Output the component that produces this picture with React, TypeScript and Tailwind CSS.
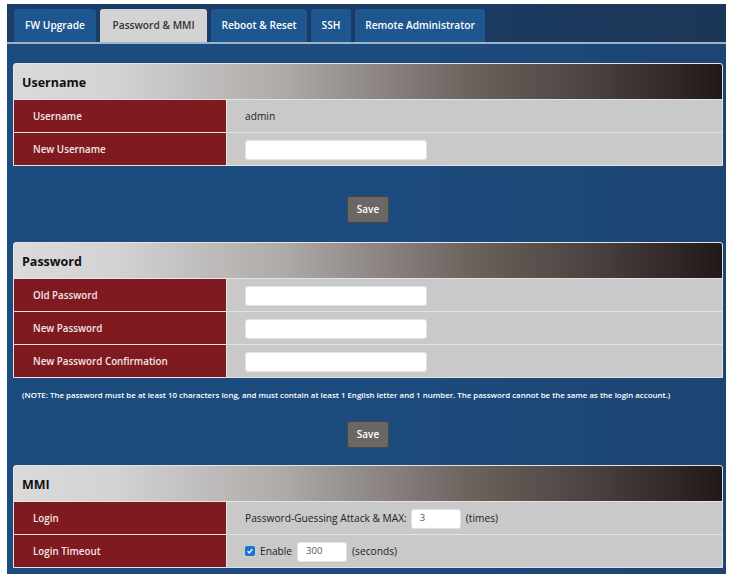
import type { ReactNode } from "react";

const FONT = { fontFamily: '"Open Sans", "Noto Sans", sans-serif' };

const TABS = [
  { label: "FW Upgrade", w: "w-[82px]" },
  { label: "Password & MMI", w: "w-[107px]", active: true },
  { label: "Reboot & Reset", w: "w-[96px]" },
  { label: "SSH", w: "w-[40px]" },
  { label: "Remote Administrator", w: "w-[130px]" },
];

function Panel({ title, children }: { title: string; children: ReactNode }) {
  return (
    <div className="overflow-hidden rounded-t-[3px] border border-[#e4e4e4] bg-[#e4e4e4]">
      <div className="flex h-[35px] items-center bg-[linear-gradient(to_right,#dadada_0%,#d3d3d3_14%,#aeaaa8_38%,#6d6460_64%,#463c39_84%,#231819_100%)] pl-[8px] pt-[3px] text-[12.5px] font-bold text-[#111]">
        {title}
      </div>
      <div className="flex flex-col gap-px pt-px">{children}</div>
    </div>
  );
}

function Row({ label, children }: { label: string; children?: ReactNode }) {
  return (
    <div className="flex h-[32px]">
      <div className="flex w-[212px] items-center bg-[#7f1b20] pl-[19px] pt-[2px] text-[9.8px] font-semibold text-[#f3e6e6]">
        {label}
      </div>
      <div className="ml-px flex flex-1 items-center gap-[5px] bg-[#c9c9c9] pl-[18px] pt-[1px] text-[10.2px] text-[#222]">
        {children}
      </div>
    </div>
  );
}

function Field({ w = "w-[182px]", value }: { w?: string; value?: string }) {
  return (
    <div
      className={`flex h-[20px] ${w} items-center rounded-[3px] border border-[#e2e2e2] bg-white pl-[8px] text-[9.5px] text-[#555]`}
    >
      {value}
    </div>
  );
}

function SaveButton() {
  return (
    <div className="flex justify-center">
      <button className="h-[27px] w-[42px] rounded-[3px] border border-[#4a4745] bg-[#6b6764] text-[10px] font-semibold text-white">
        Save
      </button>
    </div>
  );
}

export default function App() {
  return (
    <div className="h-[578px] w-[732px] overflow-hidden bg-white pl-[7px] pt-[4px]" style={FONT}>
      <div className="flex h-[570px] w-[719px] flex-col bg-[linear-gradient(to_right,#1c4b7d_0%,#1c4b7d_55%,#1d4472_100%)]">
        <div className="flex h-[38px] items-end gap-[4px] bg-[linear-gradient(to_right,#1b3d68_0%,#1b3b63_60%,#1c3656_100%)] pl-[7px]">
          {TABS.map((t) => (
            <div
              key={t.label}
              className={`flex h-[33px] ${t.w} items-center justify-center rounded-t-[3px] text-[10.2px] font-semibold ${
                t.active ? "bg-[#d3d3d3] text-[#333]" : "bg-[#1e5690] text-white"
              }`}
            >
              {t.label}
            </div>
          ))}
        </div>
        <div className="h-[2px] bg-[#9fb2c8]" />

        <div className="ml-[6px] mr-[3px] mt-[19px] flex flex-col">
          <Panel title="Username">
            <Row label="Username">admin</Row>
            <Row label="New Username">
              <Field />
            </Row>
          </Panel>

          <div className="mt-[30px] mb-[19px]">
            <SaveButton />
          </div>

          <Panel title="Password">
            <Row label="Old Password">
              <Field />
            </Row>
            <Row label="New Password">
              <Field />
            </Row>
            <Row label="New Password Confirmation">
              <Field />
            </Row>
          </Panel>

          <p className="mt-[12px] h-[11px] pl-[9px] text-[7.9px] leading-[11px] font-semibold whitespace-nowrap text-white">
            (NOTE: The password must be at least 10 characters long, and must contain at least 1 English letter and 1
            number. The password cannot be the same as the login account.)
          </p>

          <div className="mt-[20px] mb-[17px]">
            <SaveButton />
          </div>

          <Panel title="MMI">
            <Row label="Login">
              <span className="mr-[-1px]">Password-Guessing Attack &amp; MAX:</span>
              <Field w="w-[50px]" value="3" />
              <span>(times)</span>
            </Row>
            <Row label="Login Timeout">
              <span className="flex items-center gap-[5px]">
                <span className="flex h-[10px] w-[10px] items-center justify-center rounded-[2px] bg-[#1a73d9]">
                  <svg viewBox="0 0 10 10" className="h-[8px] w-[8px]">
                    <path d="M2 5.2 L4.2 7.2 L8 2.8" fill="none" stroke="white" strokeWidth="1.6" />
                  </svg>
                </span>
                Enable
              </span>
              <Field w="w-[50px]" value="300" />
              <span>(seconds)</span>
            </Row>
          </Panel>
        </div>
      </div>
    </div>
  );
}
